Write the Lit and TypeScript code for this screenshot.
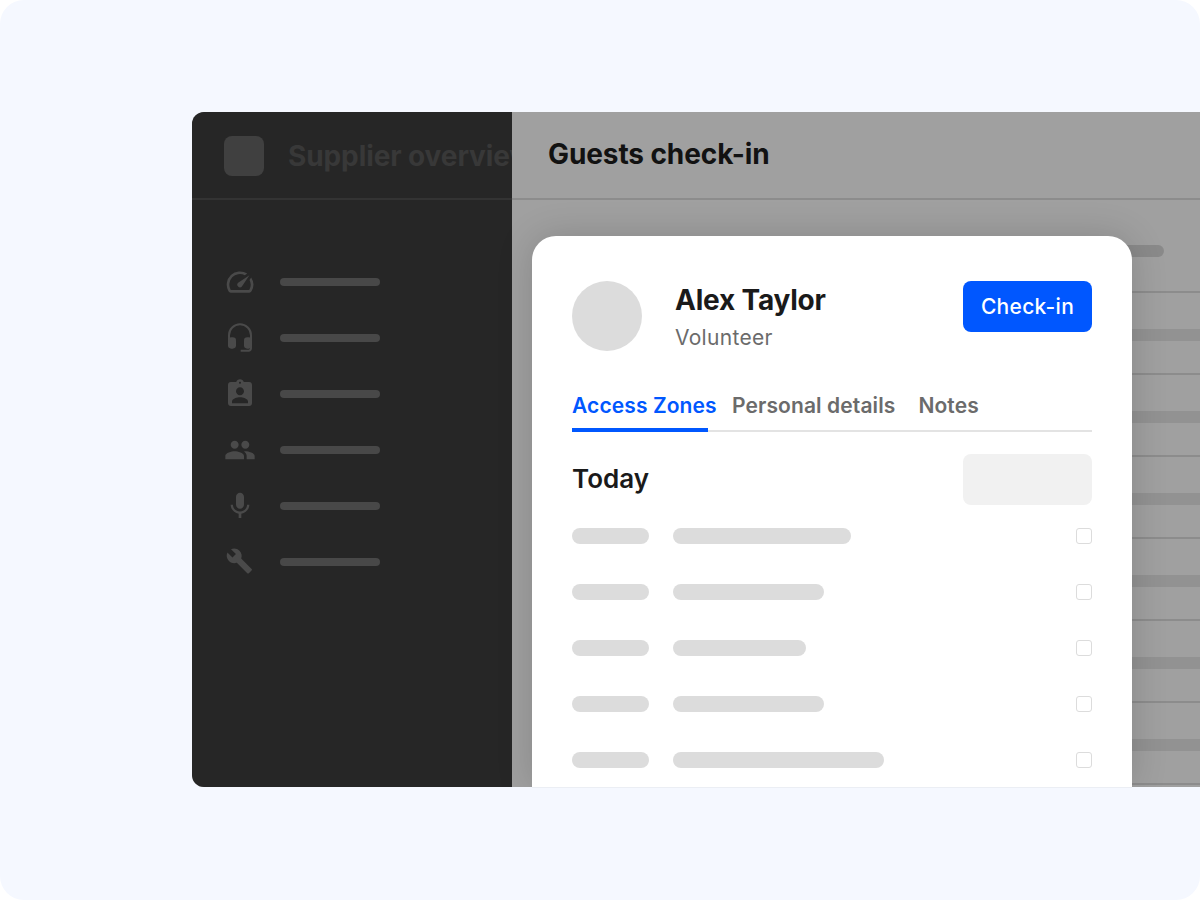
import { LitElement, html, css, svg } from "lit";
import { customElement } from "lit/decorators.js";

const icons = [
  svg`<path d="M20.38 8.57l-1.23 1.85a8 8 0 0 1-.22 7.58H5.07A8 8 0 0 1 15.58 6.85l1.85-1.23A10 10 0 0 0 3.35 19a2 2 0 0 0 1.72 1h13.85a2 2 0 0 0 1.74-1 10 10 0 0 0-.27-10.44z"/><path d="M10.59 15.41a2 2 0 0 0 2.83 0l5.66-8.49-8.49 5.66a2 2 0 0 0 0 2.83z"/>`,
  svg`<path class="line" d="M3.75 14V10a8.25 8.25 0 0 1 16.5 0v9.75a1.75 1.75 0 0 1-1.75 1.75H12.5"/><rect x="3" y="11.5" width="6" height="8.5" rx="2.5"/><rect x="15" y="11.5" width="6" height="8.5" rx="2.5"/>`,
  svg`<path d="M19 3h-4.18C14.4 1.84 13.3 1 12 1s-2.4.84-2.82 2H5c-1.1 0-2 .9-2 2v14c0 1.1.9 2 2 2h14c1.1 0 2-.9 2-2V5c0-1.1-.9-2-2-2zm-7-.25c.22 0 .41.1.55.25.12.13.2.31.2.5 0 .41-.34.75-.75.75s-.75-.34-.75-.75c0-.19.08-.37.2-.5.14-.15.33-.25.55-.25zM12 7c1.66 0 3 1.34 3 3s-1.34 3-3 3-3-1.34-3-3 1.34-3 3-3zm6 12H6v-1.4c0-2 4-3.1 6-3.1s6 1.1 6 3.1V19z"/>`,
  svg`<path d="M16 11c1.66 0 2.99-1.34 2.99-3S17.66 5 16 5s-3 1.34-3 3 1.34 3 3 3zm-8 0c1.66 0 2.99-1.34 2.99-3S9.66 5 8 5 5 6.34 5 8s1.34 3 3 3zm0 2c-2.33 0-7 1.17-7 3.5V19h14v-2.5c0-2.33-4.67-3.5-7-3.5zm8 0c-.29 0-.62.02-.97.05 1.16.84 1.97 1.97 1.97 3.45V19h6v-2.5c0-2.33-4.67-3.5-7-3.5z"/>`,
  svg`<path d="M12 14c1.66 0 2.99-1.34 2.99-3L15 5c0-1.66-1.34-3-3-3S9 3.34 9 5v6c0 1.66 1.34 3 3 3zm5.3-3c0 3-2.54 5.1-5.3 5.1S6.7 14 6.7 11H5c0 3.41 2.72 6.23 6 6.72V21h2v-3.28c3.28-.48 6-3.3 6-6.72h-1.7z"/>`,
  svg`<g transform="translate(1.2 .9) scale(.86)"><path d="M22.7 19l-9.1-9.1c.9-2.3.4-5-1.5-6.9-2-2-5-2.4-7.4-1.3L9 6 6 9 1.6 4.7C.4 7.1.9 10.1 2.9 12.1c1.9 1.9 4.6 2.4 6.9 1.5l9.1 9.1c.4.4 1 .4 1.4 0l2.3-2.3c.5-.4.5-1.1.1-1.4z"/></g>`,
];

const rows = [178, 151, 133, 151, 211];

@customElement("app-root")
export class AppRoot extends LitElement {
  static styles = css`
    :host { display: block; width: 1200px; height: 900px; background: #fff; font-family: Inter, "Liberation Sans", sans-serif; }
    * { box-sizing: border-box; }
    .stage { width: 1200px; height: 900px; border-radius: 24px; background: #f5f8ff; padding: 112px 0 0 192px; overflow: hidden; }
    .window { position: relative; display: flex; height: 675px; width: 1008px; border-radius: 12px 0 0 12px; overflow: hidden; background: #a0a0a0; }
    .edge { width: 600px; height: 1px; margin-left: 340px; background: #ebeef4; }
    .side { width: 320px; flex: none; background: #262626; }
    .side-head { height: 88px; display: flex; align-items: center; gap: 24px; padding: 0 0 0 32px; border-bottom: 2px solid #333; overflow: hidden; white-space: nowrap; }
    .logo { width: 40px; height: 40px; border-radius: 8px; background: #404040; flex: none; margin-top: 2px; }
    .side-title { font-size: 28px; font-weight: 700; letter-spacing: -.1px; color: #383838; margin-top: 2px; }
    .nav { display: flex; flex-direction: column; gap: 24px; padding: 66px 0 0 32px; }
    .nav-item { display: flex; align-items: center; gap: 24px; height: 32px; }
    .nav-item svg { width: 32px; height: 32px; fill: #4a4a4a; flex: none; }
    .nav-item .line { fill: none; stroke: #4a4a4a; stroke-width: 1.5; }
    .nav-bar { width: 100px; height: 8px; border-radius: 4px; background: #484848; }
    .main { flex: 1; min-width: 0; }
    .main-head { height: 88px; padding: 24px 36px; border-bottom: 2px solid #8c8c8c; font-size: 28px; font-weight: 700; color: #121212; line-height: 36px; letter-spacing: -.1px; }
    .content { padding: 45px 0 0 36px; }
    .top-bar { width: 616px; height: 12px; border-radius: 6px; background: #8a8a8a; margin-bottom: 34px; }
    .row { height: 82px; border-top: 2px solid #8c8c8c; padding-top: 36px; }
    .band { height: 12px; background: #929292; }
    .modal { position: absolute; left: 340px; top: 124px; width: 600px; height: 551px; background: #fff; border-radius: 24px 24px 0 0; padding: 45px 40px 0; box-shadow: 0 0 36px rgba(0,0,0,.16); }
    .person { display: flex; align-items: flex-start; height: 70px; }
    .avatar { width: 70px; height: 70px; border-radius: 50%; background: #dcdcdc; flex: none; }
    .who { margin-left: 33px; flex: 1; }
    .name { font-size: 28px; font-weight: 700; letter-spacing: -.2px; color: #1a1a1a; line-height: 38px; }
    .role { font-size: 21px; letter-spacing: .3px; color: #6b6b6b; line-height: 28px; margin-top: 5px; }
    .btn { width: 129px; height: 51px; border-radius: 8px; background: #0057ff; color: #fff; font-size: 21px; letter-spacing: .3px; font-weight: 500; display: flex; align-items: center; justify-content: center; }
    .tabs { display: flex; margin-top: 27px; height: 54px; border-bottom: 2px solid #e3e3e3; font-size: 21px; letter-spacing: .1px; font-weight: 600; color: #6b6b6b; line-height: 56px; }
    .tab { white-space: nowrap; }
    .tab.active { width: 136px; color: #0057ff; border-bottom: 4px solid #0057ff; height: 54px; margin-right: 24px; }
    .tab.mid { margin-right: 23px; }
    .today { display: flex; justify-content: space-between; align-items: center; margin-top: 22px; height: 51px; }
    .today-title { font-size: 26px; font-weight: 600; color: #1a1a1a; line-height: 49px; height: 51px; }
    .today-box { width: 129px; height: 51px; border-radius: 8px; background: #f1f1f1; }
    .list { display: flex; flex-direction: column; gap: 40px; margin-top: 23px; }
    .item { display: flex; align-items: center; height: 16px; gap: 24px; }
    .pill { height: 16px; border-radius: 8px; background: #dcdcdc; }
    .pill.short { width: 77px; }
    .check { width: 16px; height: 16px; border-radius: 3px; border: 1px solid #dcdcdc; margin-left: auto; }
  `;

  render() {
    return html`
      <div class="stage">
        <div class="window">
          <aside class="side">
            <div class="side-head"><div class="logo"></div><div class="side-title">Supplier overview</div></div>
            <div class="nav">
              ${icons.map((i) => html`<div class="nav-item"><svg viewBox="0 0 24 24">${i}</svg><div class="nav-bar"></div></div>`)}
            </div>
          </aside>
          <section class="main">
            <div class="main-head">Guests check-in</div>
            <div class="content">
              <div class="top-bar"></div>
              ${[0, 1, 2, 3, 4, 5, 6].map(() => html`<div class="row"><div class="band"></div></div>`)}
            </div>
          </section>
          <div class="modal">
            <div class="person">
              <div class="avatar"></div>
              <div class="who"><div class="name">Alex Taylor</div><div class="role">Volunteer</div></div>
              <div class="btn">Check-in</div>
            </div>
            <div class="tabs">
              <div class="tab active">Access Zones</div>
              <div class="tab mid">Personal details</div>
              <div class="tab">Notes</div>
            </div>
            <div class="today"><div class="today-title">Today</div><div class="today-box"></div></div>
            <div class="list">
              ${rows.map((w) => html`<div class="item"><div class="pill short"></div><div class="pill" style="width:${w}px"></div><div class="check"></div></div>`)}
            </div>
          </div>
        </div>
        <div class="edge"></div>
      </div>
    `;
  }
}
